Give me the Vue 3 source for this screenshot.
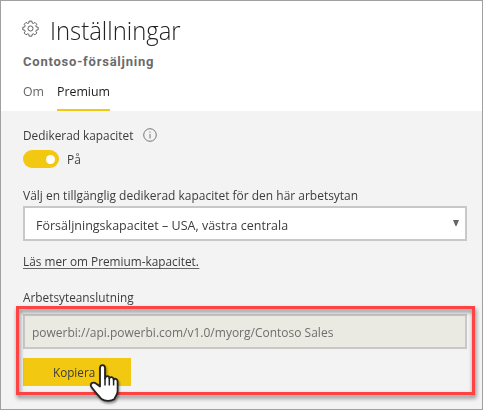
<script setup>
import { ref } from 'vue'

const tabs = ['Om', 'Premium']
const activeTab = ref('Premium')
const enabled = ref(true)
const capacity = 'Försäljningskapacitet – USA, västra centrala'
const connection = 'powerbi://api.powerbi.com/v1.0/myorg/Contoso Sales'
</script>

<template>
  <main class="panel">
    <header class="head">
      <div class="title-row">
        <svg class="gear" viewBox="0 0 18 18" width="17" height="17">
          <path
            d="M7.5 1.2h3l.3 2 1.2.5 1.7-1.2 2 2-1.1 1.7.5 1.2 2 .3v2.7l-2 .4-.5 1.2 1.1 1.7-2 2-1.7-1.1-1.2.5-.3 2h-3l-.3-2-1.2-.5-1.7 1.1-2-2 1.1-1.7-.5-1.2-2-.4V7.700l2-.3.5-1.2-1.1-1.700 2-2 1.700 1.200 1.200-.5z"
          />
          <circle cx="9" cy="9" r="2.7" />
        </svg>
        <h1>Inställningar</h1>
      </div>
      <h2>Contoso-försäljning</h2>
      <nav class="tabs">
        <button
          v-for="tab in tabs"
          :key="tab"
          class="tab"
          :class="{ active: tab === activeTab }"
          @click="activeTab = tab"
        >
          <span class="narrow">{{ tab }}</span>
        </button>
      </nav>
    </header>

    <section class="body">
      <div class="label-row">
        <span class="narrow">Dedikerad kapacitet</span>
        <svg class="info" viewBox="0 0 14 14" width="14" height="14">
          <circle cx="7" cy="7" r="6.3" />
          <path d="M7 6v4.500M7 3.500v1.200" />
        </svg>
      </div>
      <div class="toggle-row">
        <button class="toggle" :class="{ on: enabled }" @click="enabled = !enabled">
          <span class="knob"></span>
        </button>
        <span class="state narrow">På</span>
      </div>
      <div class="choose"><span class="narrow">Välj en tillgänglig dedikerad kapacitet för den här arbetsytan</span></div>
      <div class="select">
        <span class="capacity narrow">{{ capacity }}</span>
        <svg class="arrow" viewBox="0 0 6 7" width="6" height="7"><path d="M0 0h6L3.500 6h-1z" /></svg>
      </div>
      <div class="link-row"><a class="link narrow">Läs mer om Premium-kapacitet.</a></div>
      <div class="conn-label"><span class="narrow">Arbetsyteanslutning</span></div>
      <div class="connection">
        <div class="field"><span class="narrow">{{ connection }}</span></div>
        <button class="copy"><span class="narrow">Kopiera</span></button>
        <div class="highlight"></div>
        <svg class="hand" viewBox="0 0 32 42" width="32" height="42">
          <path
            d="M11 23.500V5.200C11 1 16 1 16 5.200V15.500C16.800 12.300 20.300 12.600 20.300 15.500C21.300 13.300 24.600 13.800 24.600 16.700C26.200 14.800 28.600 16 28.600 18.500V28C28.600 32 26.500 32.500 25.500 36C22 38.500 16 38.500 12.500 36C9 32 5 28 2 23.300C1 20 4.500 18.500 7 20.500Z"
          />
          <path class="fingers" d="M16 15v7.500M20.300 15.500v7M24.600 16.700v5.800" />
        </svg>
      </div>
    </section>
  </main>
</template>

<style>
body {
  margin: 0;
}
</style>

<style scoped>
.panel {
  box-sizing: border-box;
  width: 483px;
  height: 410px;
  border: 1px solid #a0a0a0;
  background: #f3f3f3;
  overflow: hidden;
  font: 13px/18px "Open Sans", "Noto Sans", sans-serif;
  color: #3c3c3c;
  white-space: nowrap;
}
.narrow {
  display: inline-block;
  transform: scaleX(0.918);
  transform-origin: 0 50%;
}
button {
  font: inherit;
  border: 0;
  padding: 0;
  background: none;
  color: inherit;
}
.head {
  height: 110px;
  background: #fff;
  padding-left: 22px;
  box-sizing: border-box;
}
.title-row {
  display: flex;
  height: 50px;
  padding-top: 10px;
  box-sizing: border-box;
}
.gear {
  margin: 9px 0 0 -1px;
  fill: none;
  stroke: #555;
  stroke-width: 1;
  stroke-linejoin: round;
}
h1 {
  margin: 0 0 0 11px;
  font: 300 25px/38px "Open Sans", sans-serif;
  color: #222;
  transform: scaleX(0.955);
  transform-origin: 0 50%;
}
h2 {
  margin: 0;
  height: 22px;
  font: 700 13px/22px Roboto, sans-serif;
  letter-spacing: 0.78px;
  color: #6a6a6a;
}
.tabs {
  display: flex;
  height: 38px;
}
.tab {
  box-sizing: border-box;
  width: 34px;
  height: 38px;
  line-height: 36px;
  text-align: left;
  border-bottom: 2px solid transparent;
  color: #666;
}
.tab.active {
  width: 53px;
  color: #1c1c1c;
  border-color: #f2c811;
}
.tab .narrow {
  transform: scaleX(0.95);
}
.body {
  padding: 15px 15px 0 22px;
}
.label-row {
  display: flex;
  height: 18px;
}
.label-row .narrow {
  width: 120px;
  transform: scaleX(0.91);
}
.info {
  margin: 2px 0 0;
  fill: none;
  stroke: #777;
}
.toggle-row {
  display: flex;
  margin-top: 6px;
  height: 18px;
}
.toggle {
  display: flex;
  align-items: center;
  width: 36px;
  height: 18px;
  padding: 0 4px;
  border-radius: 9px;
  background: #c8c8c8;
}
.toggle.on {
  justify-content: flex-end;
  background: #f2c811;
}
.knob {
  width: 9px;
  height: 9px;
  border-radius: 50%;
  background: #fff;
}
.state {
  margin-left: 8px;
}
.choose {
  margin-top: 18px;
  height: 20px;
}
.choose .narrow {
  transform: scaleX(0.921);
}
.select,
.field {
  box-sizing: border-box;
  display: flex;
  align-items: center;
  height: 35px;
  border: 2px solid #c8c8c8;
}
.select {
  justify-content: space-between;
  padding: 3px 6px 0 11px;
  background: #fff;
}
.select .capacity {
  transform: scaleX(0.962);
}
.arrow {
  margin-top: -3px;
  fill: #666;
}
.link-row {
  margin-top: 11px;
  height: 18px;
}
.link {
  height: 16px;
  border-bottom: 1px solid #666;
  transform: scaleX(0.909);
}
.conn-label {
  margin-top: 18px;
  height: 26px;
}
.conn-label .narrow {
  transform: scaleX(0.909);
}
.connection {
  position: relative;
}
.field {
  padding: 1px 0 0 7px;
  background: #eaeae2;
  color: #6e6e6e;
}
.field .narrow {
  transform: scaleX(0.923);
}
.copy {
  display: block;
  width: 108px;
  height: 28px;
  margin-top: 9px;
  padding-left: 30px;
  text-align: left;
  background: #f2c811;
}
.copy .narrow {
  transform: scaleX(0.9);
}
.highlight {
  position: absolute;
  box-sizing: border-box;
  left: -7px;
  top: -8px;
  width: 459px;
  height: 89px;
  border: 3px solid #ff4343;
  filter: drop-shadow(1px 3px 2px rgba(0, 0, 0, 0.5));
}
.hand {
  position: absolute;
  left: 66px;
  top: 49px;
  fill: #fff;
  stroke: #222;
  stroke-width: 1.8;
  stroke-linejoin: round;
  filter: drop-shadow(1px 2px 1px rgba(0, 0, 0, 0.4));
}
.fingers {
  stroke-width: 1.5;
}
</style>
